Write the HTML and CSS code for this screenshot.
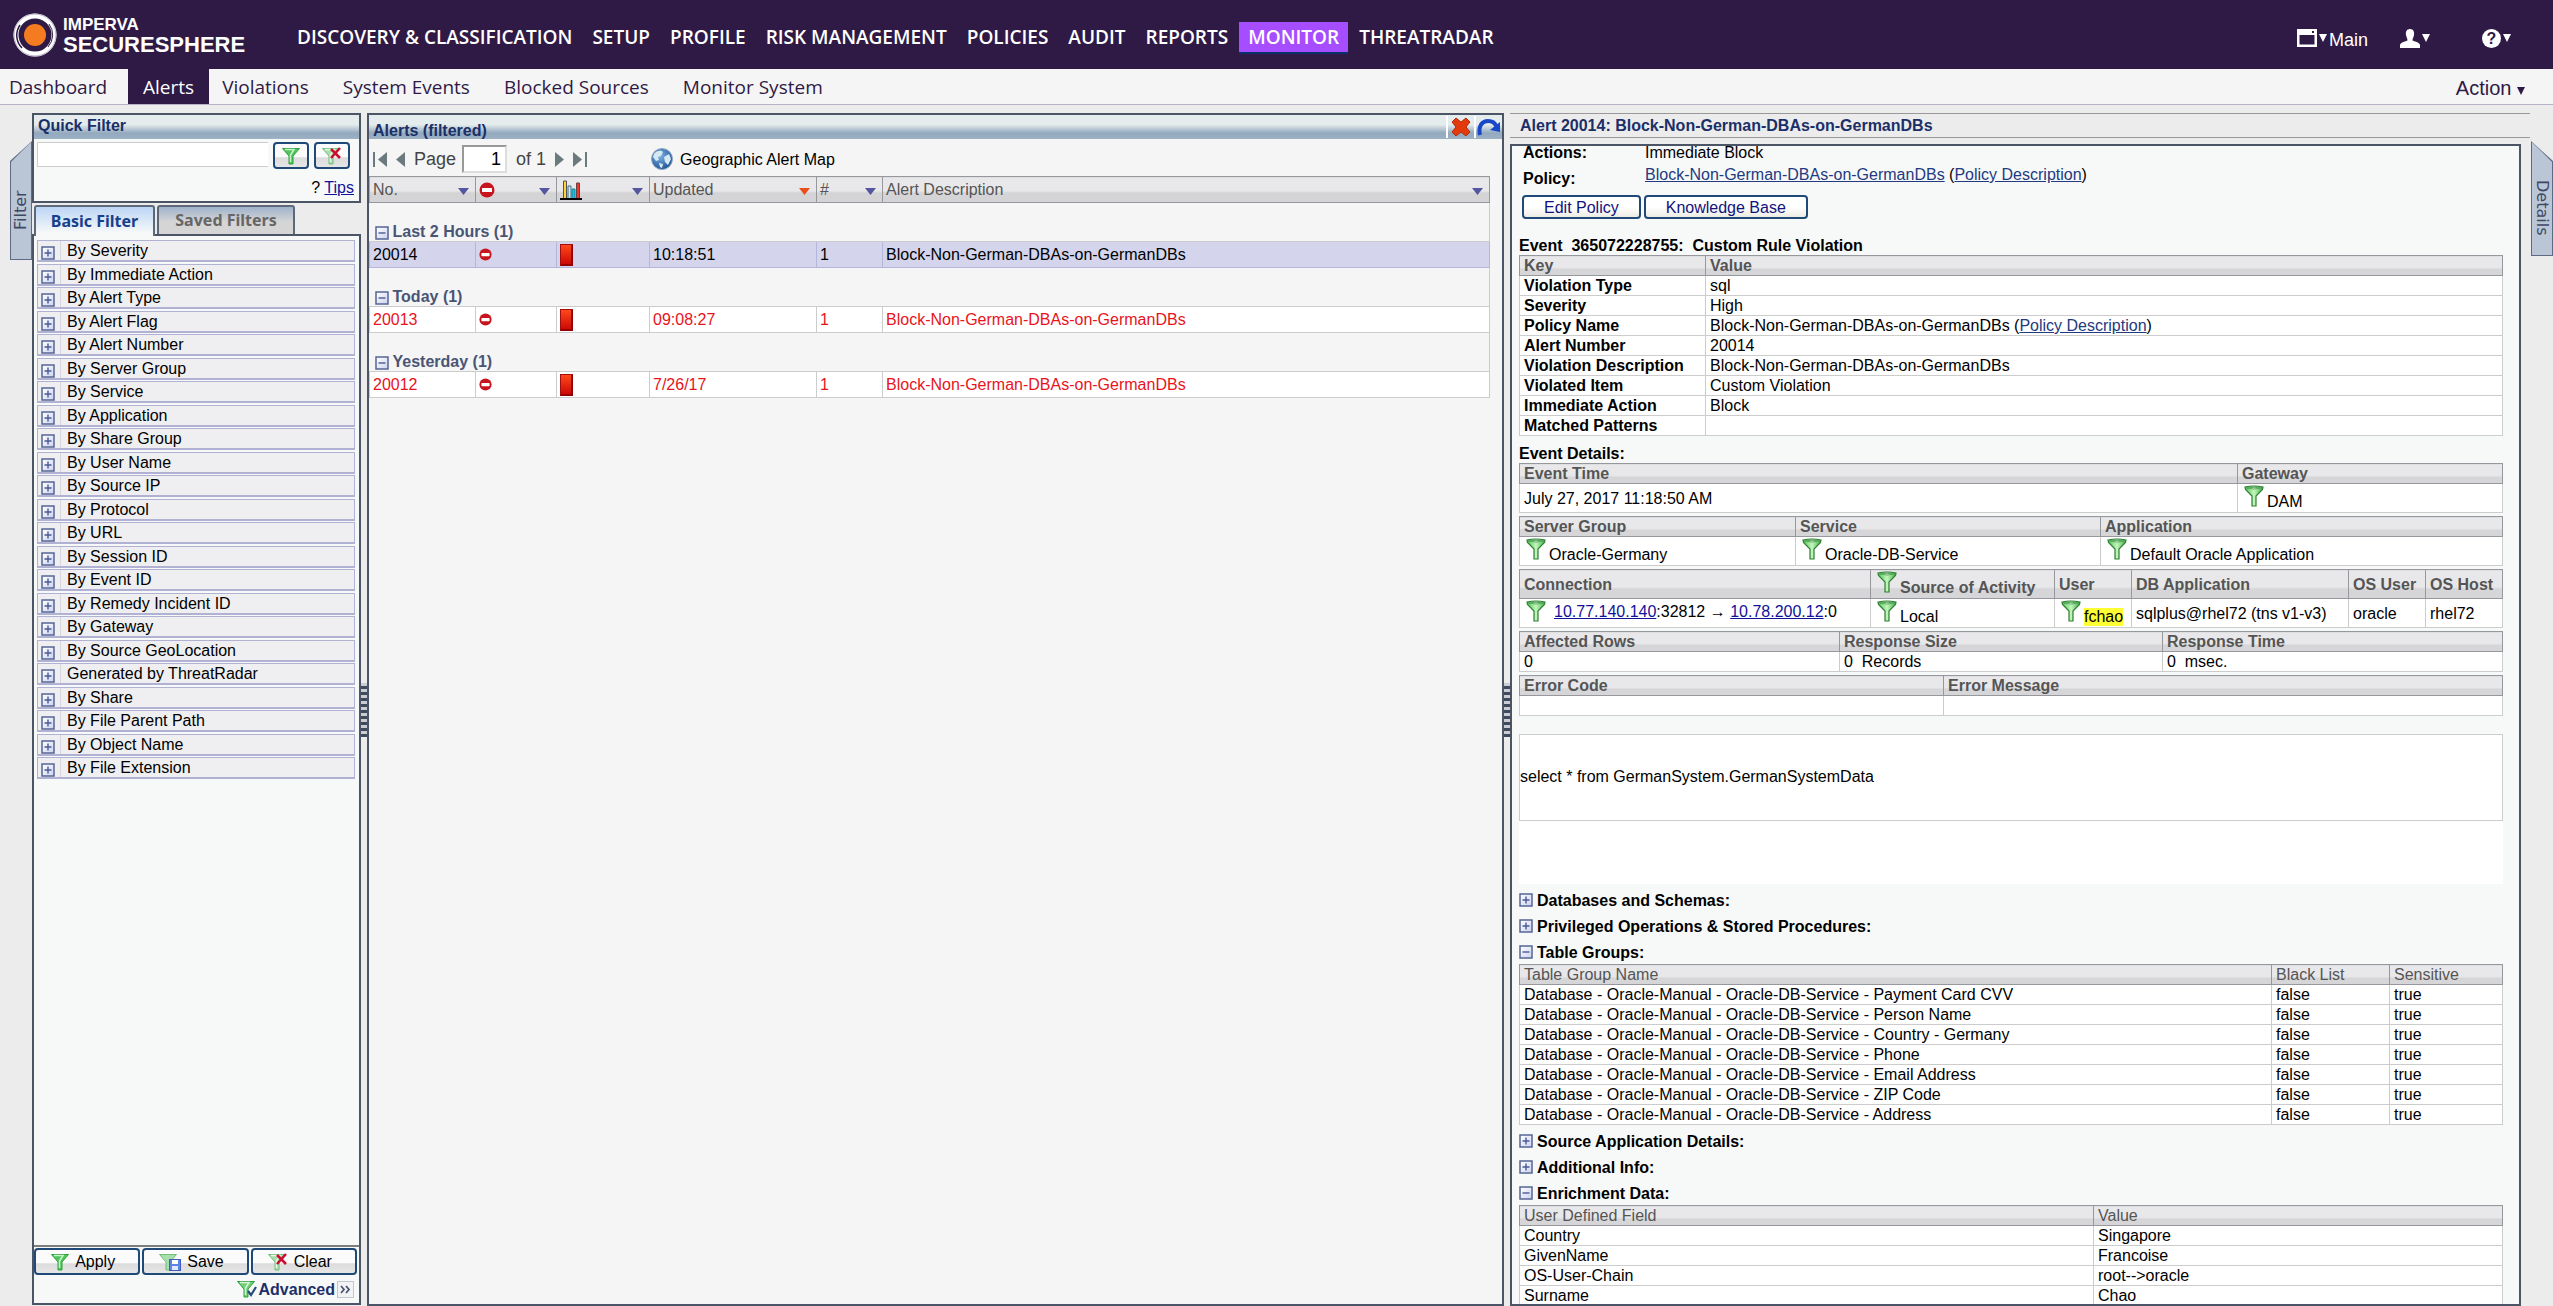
FILE: index.html
```html
<!DOCTYPE html>
<html lang="en">
<head>
    <meta charset="UTF-8">
    <meta name="viewport" content="width=device-width, initial-scale=1.0">
    <title>SecureSphere - Alerts</title>
    <link rel="stylesheet" href="styles.css">
</head>
<body>
    <!-- shared icons -->
    <svg class="defs" width="0" height="0" aria-hidden="true">
        <defs>
            <linearGradient id="green" x1="0" x2="1" y1="0" y2="0">
                <stop offset="0" stop-color="#4fc455"/>
                <stop offset="0.5" stop-color="#c4f7bd"/>
                <stop offset="1" stop-color="#3fb045"/>
            </linearGradient>
            <linearGradient id="red" x1="0" x2="0" y1="0" y2="1">
                <stop offset="0" stop-color="#ff4a1c"/>
                <stop offset="1" stop-color="#c80404"/>
            </linearGradient>
            <linearGradient id="box" x1="0" x2="1" y1="0" y2="1">
                <stop offset="0" stop-color="#ffffff"/>
                <stop offset="1" stop-color="#ccd2f0"/>
            </linearGradient>
            <radialGradient id="earth" cx="0.4" cy="0.35" r="0.7">
                <stop offset="0" stop-color="#7fb4e6"/>
                <stop offset="1" stop-color="#1c4f93"/>
            </radialGradient>
        </defs>
        <symbol id="funnel" viewBox="0 0 20 22">
            <path d="M1 2 Q10 0 19 2 L18.500 4.500 L12 11 V21 H8 V11 L1.500 4.500 Z" fill="url(#green)" stroke="#2f7f35" stroke-width="1.200"/>
            <path d="M2.500 3 Q10 1.500 17.500 3 Q10 5 2.500 3 Z" fill="#e9fbe6" stroke="#3c9442" stroke-width="0.800"/>
        </symbol>
        <symbol id="funnel-flat" viewBox="0 0 18 18">
            <path d="M0.500 1.500 H17.500 L11 9 V17 H7 V9 Z" fill="#52c45c" stroke="#2fa03c"/>
            <path d="M3 2.500 H12 L8.500 8 V15" fill="none" stroke="#c9f3cb" stroke-width="1.500"/>
        </symbol>
        <symbol id="funnel-x" viewBox="0 0 20 18">
            <path d="M0.500 1.500 H17.500 L11 9 V17 H7 V9 Z" fill="#a9dfad" stroke="#6fbf78"/>
            <path d="M3 2.500 H12 L8.500 8 V15" fill="none" stroke="#e6f8e6" stroke-width="1.500"/>
            <path d="M9 2 L18 11 M18 1 L9 11" stroke="#c8102e" stroke-width="2.600"/>
        </symbol>
        <symbol id="funnel-save" viewBox="0 0 22 18">
            <path d="M0.500 1.500 H17.500 L11 9 V17 H7 V9 Z" fill="#a9dfad" stroke="#6fbf78"/>
            <rect x="10.500" y="6.500" width="11" height="11" fill="#5c84e0" stroke="#3c5fc0"/>
            <rect x="13" y="7" width="6" height="4" fill="#fff"/>
            <rect x="13" y="13" width="6" height="4" fill="#dfe8ff"/>
        </symbol>
        <symbol id="funnel-check" viewBox="0 0 20 18">
            <path d="M0.500 1.500 H17.500 L11 9 V17 H7 V9 Z" fill="#6fd077" stroke="#2f9a3b"/>
            <path d="M3 2.500 H12 L8.500 8 V15" fill="none" stroke="#d9f6da" stroke-width="1.500"/>
            <path d="M11 11 L14 15 L19 7" fill="none" stroke="#2b4a7c" stroke-width="2.200"/>
        </symbol>
        <symbol id="plus" viewBox="0 0 14 14">
            <rect x="1" y="1" width="12" height="12" fill="url(#box)" stroke="#566694" stroke-width="1.500"/>
            <path d="M3.500 7 H10.500 M7 3.500 V10.500" stroke="#4a5b92" stroke-width="1.400"/>
        </symbol>
        <symbol id="minus" viewBox="0 0 14 14">
            <rect x="1" y="1" width="12" height="12" fill="url(#box)" stroke="#566694" stroke-width="1.500"/>
            <path d="M3.500 7 H10.500" stroke="#4a5b92" stroke-width="1.400"/>
        </symbol>
        <symbol id="block" viewBox="0 0 16 16">
            <circle cx="8" cy="8" r="7.500" fill="#c8141c"/>
            <rect x="3" y="6" width="10" height="4" rx="0.500" fill="#fff"/>
        </symbol>
        <symbol id="severity" viewBox="0 0 13 22">
            <rect x="0.500" y="0.500" width="12" height="21" fill="url(#red)" stroke="#a30d0d"/>
            <path d="M12 1 V21 H1" fill="none" stroke="#8c0000" stroke-width="1.500"/>
        </symbol>
        <symbol id="down" viewBox="0 0 11 8">
            <path d="M0 0 H11 L5.500 7 Z" fill="currentColor"/>
        </symbol>
        <symbol id="caret" viewBox="0 0 8 8">
            <path d="M0 0 H8 L4 8 Z" fill="currentColor"/>
        </symbol>
    </svg>

    <header class="topbar">
        <a class="logo" href="#" aria-label="Imperva SecureSphere">
            <svg width="44" height="46" viewBox="0 0 44 46">
                <circle cx="22" cy="23" r="19" fill="none" stroke="#fff" stroke-width="5"/>
                <circle cx="22" cy="23" r="21" fill="none" stroke="#b9b1c6" stroke-width="1"/>
                <path d="M7 13 A18 18 0 0 0 9 36" fill="none" stroke="#2f1a45" stroke-width="1.500"/>
                <path d="M36 12 A18 18 0 0 1 35 35" fill="none" stroke="#2f1a45" stroke-width="1"/>
                <circle cx="22" cy="23" r="11" fill="#f47b20"/>
            </svg>
            <span class="logo-text">
                <span class="logo-small">IMPERVA</span>
                <span class="logo-big">SECURESPHERE</span>
            </span>
        </a>
        <nav class="main-nav">
            <a href="#">DISCOVERY &amp; CLASSIFICATION</a>
            <a href="#">SETUP</a>
            <a href="#">PROFILE</a>
            <a href="#">RISK MANAGEMENT</a>
            <a href="#">POLICIES</a>
            <a href="#">AUDIT</a>
            <a href="#">REPORTS</a>
            <a href="#" class="active">MONITOR</a>
            <a href="#">THREATRADAR</a>
        </nav>
        <div class="tools">
            <button class="tool">
                <svg width="20" height="18" viewBox="0 0 20 18"><path d="M0 0 H20 V18 H0 Z M2.500 6 V15.500 H17.500 V6 Z" fill="#fff" fill-rule="evenodd"/><rect x="15" y="2" width="2" height="2" fill="#2f1a45"/></svg>
                <svg class="tri" width="8" height="8"><use href="#caret"/></svg>
                <span class="tool-name">Main</span>
            </button>
            <button class="tool" aria-label="User">
                <svg width="20" height="19" viewBox="0 0 20 19"><path d="M10 0 C13.500 0 14.500 3 14 6 C13.700 8 12.500 9.500 12.500 11.500 C14 12.500 19.500 13 20 16 V19 H0 V16 C0.500 13 6 12.500 7.500 11.500 C7.500 9.500 6.300 8 6 6 C5.500 3 6.500 0 10 0 Z" fill="#fff"/></svg>
                <svg class="tri" width="8" height="8"><use href="#caret"/></svg>
            </button>
            <button class="tool" aria-label="Help">
                <span class="help">?</span>
                <svg class="tri" width="8" height="8"><use href="#caret"/></svg>
            </button>
        </div>
    </header>

    <nav class="sub-nav">
        <a href="#">Dashboard</a>
        <a href="#" class="active">Alerts</a>
        <a href="#">Violations</a>
        <a href="#">System Events</a>
        <a href="#">Blocked Sources</a>
        <a href="#">Monitor System</a>
        <button class="action">Action <svg width="8" height="8"><use href="#caret"/></svg></button>
    </nav>

    <main class="workspace">
        <div class="gutter">
            <button class="side-tab side-left"><span>Filter</span></button>
        </div>

        <aside class="filter">
            <section class="quick">
                <h2 class="bar">Quick Filter</h2>
                <div class="quick-row">
                    <input type="text" class="quick-input" aria-label="Quick filter">
                    <button class="btn icon-btn" aria-label="Apply quick filter"><svg width="18" height="18"><use href="#funnel-flat"/></svg></button>
                    <button class="btn icon-btn" aria-label="Clear quick filter"><svg width="20" height="18"><use href="#funnel-x"/></svg></button>
                </div>
                <p class="tips">? <a href="#">Tips</a></p>
            </section>
            <div class="tabs">
                <button class="tab tab-on">Basic Filter</button>
                <button class="tab">Saved Filters</button>
            </div>
            <div class="filter-body">
                <ul class="filter-list" id="filterList"></ul>
                <div class="filter-buttons">
                    <button class="btn"><svg width="18" height="18"><use href="#funnel-flat"/></svg>Apply</button>
                    <button class="btn"><svg width="22" height="18"><use href="#funnel-save"/></svg>Save</button>
                    <button class="btn"><svg width="20" height="18"><use href="#funnel-x"/></svg>Clear</button>
                </div>
                <button class="advanced"><svg width="20" height="18"><use href="#funnel-check"/></svg>Advanced<svg width="17" height="17" viewBox="0 0 17 17"><rect x="0.500" y="0.500" width="16" height="16" fill="#f3f3f6" stroke="#c3c6d2"/><path d="M4 5 L7 8.500 L4 12 M9 5 L12 8.500 L9 12" fill="none" stroke="#4a5575" stroke-width="1.800"/></svg></button>
            </div>
        </aside>

        <div class="splitter"><span class="grip"></span></div>

        <section class="alerts">
            <div class="bar alerts-bar">
                <h2>Alerts (filtered)</h2>
                <button class="bar-btn" aria-label="Close"><svg width="20" height="20" viewBox="0 0 20 20"><path d="M5 1 L10 5 L15 1 L19 5 L15 10 L19 15 L15 19 L10 15 L5 19 L1 15 L5 10 L1 5 Z" fill="#e33a0c" stroke="#b52c05"/></svg></button>
                <button class="bar-btn" aria-label="Refresh"><svg width="24" height="18" viewBox="0 0 24 18"><path d="M3 17 C1 8 5 3 11 3 C15 3 18 5 19 8" fill="none" stroke="#1746c8" stroke-width="4"/><path d="M13 12 L23 14 L23 4 Z" fill="#1746c8"/></svg></button>
            </div>
            <div class="pager">
                <button aria-label="First page"><svg width="15" height="15" viewBox="0 0 15 15"><path d="M1 0 H3 V15 H1 Z M15 0 V15 L6 7.500 Z" fill="#6b7a7c"/></svg></button>
                <button aria-label="Previous page"><svg width="9" height="15" viewBox="0 0 9 15"><path d="M9 0 V15 L0 7.500 Z" fill="#6b7a7c"/></svg></button>
                <label for="page">Page</label>
                <input type="text" id="page" value="1">
                <span>of 1</span>
                <button aria-label="Next page"><svg width="9" height="15" viewBox="0 0 9 15"><path d="M0 0 V15 L9 7.500 Z" fill="#6b7a7c"/></svg></button>
                <button aria-label="Last page"><svg width="15" height="15" viewBox="0 0 15 15"><path d="M12 0 H14 V15 H12 Z M0 0 V15 L9 7.500 Z" fill="#6b7a7c"/></svg></button>
                <button class="map"><svg width="22" height="22" viewBox="0 0 22 22"><circle cx="11" cy="11" r="10.500" fill="url(#earth)" stroke="#8fa6c2"/><path d="M3 6 C6 2 10 2 12 4 L10 8 L7 9 L8 12 L5 13 L2 9 Z M13 9 L18 6 L20 11 L17 17 L14 14 Z M8 15 L12 16 L11 20 L9 19 Z" fill="#d5e9f2"/></svg>Geographic Alert Map</button>
            </div>
            <table class="alert-table">
                <colgroup>
                    <col class="w-no"><col class="w-block"><col class="w-sev"><col class="w-upd"><col class="w-num"><col>
                </colgroup>
                <thead>
                    <tr>
                        <th><div class="th">No. <svg width="11" height="8"><use href="#down"/></svg></div></th>
                        <th><div class="th"><svg width="16" height="16" role="img" aria-label="Action"><use href="#block"/></svg><svg width="11" height="8"><use href="#down"/></svg></div></th>
                        <th><div class="th"><svg width="22" height="20" viewBox="0 0 22 20" role="img" aria-label="Severity"><path d="M0 19 H22" stroke="#000" stroke-width="2"/><path d="M3.500 18 V1 H6.500 V18" fill="#ffd23c" stroke="#555"/><path d="M8 18 V6 H11 V18" fill="#cfe6ee" stroke="#3c6f80"/><path d="M12 18 V9 H15 V18" fill="#19c3e0" stroke="#1b7f92"/><path d="M16.500 18 V3 H19.500 V18" fill="#ea3a30" stroke="#6d4040"/></svg><svg width="11" height="8"><use href="#down"/></svg></div></th>
                        <th><div class="th">Updated <svg class="sorted" width="11" height="8"><use href="#down"/></svg></div></th>
                        <th><div class="th"># <svg width="11" height="8"><use href="#down"/></svg></div></th>
                        <th><div class="th">Alert Description <svg width="11" height="8"><use href="#down"/></svg></div></th>
                    </tr>
                </thead>
                <tbody>
                    <tr class="group"><td colspan="6"><svg width="14" height="14"><use href="#minus"/></svg>Last 2 Hours (1)</td></tr>
                    <tr class="selected">
                        <td>20014</td>
                        <td class="ico"><svg width="13" height="13"><use href="#block"/></svg></td>
                        <td class="ico"><svg width="13" height="22"><use href="#severity"/></svg></td>
                        <td>10:18:51</td><td>1</td><td>Block-Non-German-DBAs-on-GermanDBs</td>
                    </tr>
                    <tr class="group"><td colspan="6"><svg width="14" height="14"><use href="#minus"/></svg>Today (1)</td></tr>
                    <tr class="unread">
                        <td>20013</td>
                        <td class="ico"><svg width="13" height="13"><use href="#block"/></svg></td>
                        <td class="ico"><svg width="13" height="22"><use href="#severity"/></svg></td>
                        <td>09:08:27</td><td>1</td><td>Block-Non-German-DBAs-on-GermanDBs</td>
                    </tr>
                    <tr class="group"><td colspan="6"><svg width="14" height="14"><use href="#minus"/></svg>Yesterday (1)</td></tr>
                    <tr class="unread">
                        <td>20012</td>
                        <td class="ico"><svg width="13" height="13"><use href="#block"/></svg></td>
                        <td class="ico"><svg width="13" height="22"><use href="#severity"/></svg></td>
                        <td>7/26/17</td><td>1</td><td>Block-Non-German-DBAs-on-GermanDBs</td>
                    </tr>
                </tbody>
            </table>
        </section>

        <div class="splitter"><span class="grip"></span></div>

        <section class="details">
            <h2 class="details-title">Alert 20014: Block-Non-German-DBAs-on-GermanDBs</h2>
            <div class="details-body">
                <dl class="summary">
                    <dt>Actions:</dt><dd>Immediate Block</dd>
                    <dt>Policy:</dt><dd><a href="#">Block-Non-German-DBAs-on-GermanDBs</a> (<a href="#">Policy Description</a>)</dd>
                </dl>
                <div class="policy-buttons">
                    <button class="btn">Edit Policy</button>
                    <button class="btn">Knowledge Base</button>
                </div>

                <h3 class="event-title">Event&nbsp; 365072228755:&nbsp; Custom Rule Violation</h3>
                <table class="grid keys">
                    <colgroup><col class="w-key"><col></colgroup>
                    <thead><tr><th>Key</th><th>Value</th></tr></thead>
                    <tbody>
                        <tr><th>Violation Type</th><td>sql</td></tr>
                        <tr><th>Severity</th><td>High</td></tr>
                        <tr><th>Policy Name</th><td>Block-Non-German-DBAs-on-GermanDBs (<a href="#">Policy Description</a>)</td></tr>
                        <tr><th>Alert Number</th><td>20014</td></tr>
                        <tr><th>Violation Description</th><td>Block-Non-German-DBAs-on-GermanDBs</td></tr>
                        <tr><th>Violated Item</th><td>Custom Violation</td></tr>
                        <tr><th>Immediate Action</th><td>Block</td></tr>
                        <tr><th>Matched Patterns</th><td></td></tr>
                    </tbody>
                </table>

                <h3 class="event-details">Event Details:</h3>
                <div class="grids">
                    <table class="grid">
                        <colgroup><col><col class="w-gateway"></colgroup>
                        <thead><tr><th>Event Time</th><th>Gateway</th></tr></thead>
                        <tbody><tr class="tall"><td>July 27, 2017 11:18:50 AM</td><td><span class="with-icon"><svg width="20" height="22"><use href="#funnel"/></svg><span>DAM</span></span></td></tr></tbody>
                    </table>
                    <table class="grid">
                        <colgroup><col class="w-group"><col class="w-service"><col></colgroup>
                        <thead><tr><th>Server Group</th><th>Service</th><th>Application</th></tr></thead>
                        <tbody>
                            <tr class="tall">
                                <td><span class="with-icon"><svg width="20" height="22"><use href="#funnel"/></svg><span>Oracle-Germany</span></span></td>
                                <td><span class="with-icon"><svg width="20" height="22"><use href="#funnel"/></svg><span>Oracle-DB-Service</span></span></td>
                                <td><span class="with-icon"><svg width="20" height="22"><use href="#funnel"/></svg><span>Default Oracle Application</span></span></td>
                            </tr>
                        </tbody>
                    </table>
                    <table class="grid">
                        <colgroup><col><col class="w-source"><col class="w-user"><col class="w-dbapp"><col class="w-os"><col class="w-os"></colgroup>
                        <thead>
                            <tr class="tall">
                                <th>Connection</th>
                                <th><span class="with-icon"><svg width="20" height="22"><use href="#funnel"/></svg><span>Source of Activity</span></span></th>
                                <th>User</th><th>DB Application</th><th>OS User</th><th>OS Host</th>
                            </tr>
                        </thead>
                        <tbody>
                            <tr class="tall">
                                <td><span class="with-icon conn"><svg width="20" height="22"><use href="#funnel"/></svg><span><a href="#" class="ip">10.77.140.140</a>:32812 → <a href="#" class="ip">10.78.200.12</a>:0</span></span></td>
                                <td><span class="with-icon"><svg width="20" height="22"><use href="#funnel"/></svg><span>Local</span></span></td>
                                <td><span class="with-icon"><svg width="20" height="22"><use href="#funnel"/></svg><mark>fchao</mark></span></td>
                                <td>sqlplus@rhel72 (tns v1-v3)</td>
                                <td>oracle</td>
                                <td>rhel72</td>
                            </tr>
                        </tbody>
                    </table>
                    <table class="grid">
                        <colgroup><col class="w-rows"><col class="w-size"><col></colgroup>
                        <thead><tr><th>Affected Rows</th><th>Response Size</th><th>Response Time</th></tr></thead>
                        <tbody><tr><td>0</td><td>0&nbsp; Records</td><td>0&nbsp; msec.</td></tr></tbody>
                    </table>
                    <table class="grid">
                        <colgroup><col class="w-error"><col></colgroup>
                        <thead><tr><th>Error Code</th><th>Error Message</th></tr></thead>
                        <tbody><tr><td></td><td></td></tr></tbody>
                    </table>
                </div>

                <div class="query">
                    <div class="query-text">select * from GermanSystem.GermanSystemData</div>
                </div>

                <div class="sections">
                    <button class="section"><svg width="14" height="14"><use href="#plus"/></svg>Databases and Schemas:</button>
                    <button class="section"><svg width="14" height="14"><use href="#plus"/></svg>Privileged Operations &amp; Stored Procedures:</button>
                    <button class="section"><svg width="14" height="14"><use href="#minus"/></svg>Table Groups:</button>
                </div>
                <table class="grid light">
                    <colgroup><col><col class="w-black"><col class="w-sens"></colgroup>
                    <thead><tr><th>Table Group Name</th><th>Black List</th><th>Sensitive</th></tr></thead>
                    <tbody>
                        <tr><td>Database - Oracle-Manual - Oracle-DB-Service - Payment Card CVV</td><td>false</td><td>true</td></tr>
                        <tr><td>Database - Oracle-Manual - Oracle-DB-Service - Person Name</td><td>false</td><td>true</td></tr>
                        <tr><td>Database - Oracle-Manual - Oracle-DB-Service - Country - Germany</td><td>false</td><td>true</td></tr>
                        <tr><td>Database - Oracle-Manual - Oracle-DB-Service - Phone</td><td>false</td><td>true</td></tr>
                        <tr><td>Database - Oracle-Manual - Oracle-DB-Service - Email Address</td><td>false</td><td>true</td></tr>
                        <tr><td>Database - Oracle-Manual - Oracle-DB-Service - ZIP Code</td><td>false</td><td>true</td></tr>
                        <tr><td>Database - Oracle-Manual - Oracle-DB-Service - Address</td><td>false</td><td>true</td></tr>
                    </tbody>
                </table>
                <div class="sections">
                    <button class="section"><svg width="14" height="14"><use href="#plus"/></svg>Source Application Details:</button>
                    <button class="section"><svg width="14" height="14"><use href="#plus"/></svg>Additional Info:</button>
                    <button class="section"><svg width="14" height="14"><use href="#minus"/></svg>Enrichment Data:</button>
                </div>
                <table class="grid light">
                    <colgroup><col><col class="w-value"></colgroup>
                    <thead><tr><th>User Defined Field</th><th>Value</th></tr></thead>
                    <tbody>
                        <tr><td>Country</td><td>Singapore</td></tr>
                        <tr><td>GivenName</td><td>Francoise</td></tr>
                        <tr><td>OS-User-Chain</td><td>root--&gt;oracle</td></tr>
                        <tr><td>Surname</td><td>Chao</td></tr>
                    </tbody>
                </table>
            </div>
        </section>

        <div class="gutter">
            <button class="side-tab side-right"><span>Details</span></button>
        </div>
    </main>

    <script>
        const filters = [
            'By Severity', 'By Immediate Action', 'By Alert Type', 'By Alert Flag',
            'By Alert Number', 'By Server Group', 'By Service', 'By Application',
            'By Share Group', 'By User Name', 'By Source IP', 'By Protocol', 'By URL',
            'By Session ID', 'By Event ID', 'By Remedy Incident ID', 'By Gateway',
            'By Source GeoLocation', 'Generated by ThreatRadar', 'By Share',
            'By File Parent Path', 'By Object Name', 'By File Extension'
        ];

        // Fill the basic filter list
        document.getElementById("filterList").innerHTML = filters.map(name =>
            `<li><button class="filter-item"><svg width="14" height="14"><use href="#plus"/></svg><span>${name}</span></button></li>`
        ).join('');
    </script>
</body>
</html>
```
FILE: styles.css
```css
* {
    box-sizing: border-box;
}

body {
    display: flex;
    flex-direction: column;
    height: 100vh;
    margin: 0;
    overflow: hidden;
    background-color: #ececec;
    color: #000;
    font-family: "Liberation Sans", Arial, sans-serif;
    font-size: 16px;
    line-height: 19px;
}

h2,
h3,
p,
ul,
dl,
dd {
    margin: 0;
    padding: 0;
}

h2,
h3 {
    font-size: 16px;
}

button {
    padding: 0;
    border: none;
    background: none;
    color: inherit;
    font: inherit;
    cursor: pointer;
}

svg {
    flex: none;
}

a {
    color: #233a80;
}

.defs {
    position: absolute;
}

/* top bar */
.topbar {
    display: flex;
    align-items: center;
    height: 69px;
    flex: none;
    padding: 0 42px 0 13px;
    background-color: #2f1a45;
    color: #fff;
}

.logo {
    display: flex;
    align-items: center;
    gap: 6px;
    width: 275px;
    color: #fff;
    text-decoration: none;
}

.logo-text {
    display: flex;
    flex-direction: column;
    padding-top: 3px;
    font-weight: bold;
}

.logo-small {
    font-size: 17px;
    line-height: 17px;
}

.logo-big {
    font-size: 22px;
    line-height: 24px;
}

.main-nav {
    display: flex;
    flex: 1;
    gap: 2px;
    padding-top: 6px;
}

.main-nav a {
    padding: 0 9px;
    border-bottom: 2px solid transparent;
    color: #fff;
    font-family: "Open Sans", sans-serif;
    font-size: 19px;
    font-weight: 600;
    line-height: 30px;
    text-decoration: none;
}

.main-nav .active {
    background-color: #a64dff;
    border-bottom-color: #0b2f6b;
}

.tools {
    display: flex;
    align-items: center;
    gap: 32px;
    padding-top: 8px;
    font-size: 18px;
}

.tool {
    display: flex;
    gap: 2px;
    height: 20px;
}

.tool:last-child {
    margin-left: 20px;
}

.tool .tri {
    margin-top: 5px;
}

.tool-name {
    padding-top: 2px;
}

.help {
    width: 19px;
    height: 19px;
    border-radius: 50%;
    background-color: #fff;
    color: #2f1a45;
    font-size: 16px;
    font-weight: bold;
    line-height: 19px;
}

/* second level navigation */
.sub-nav {
    display: flex;
    flex: none;
    height: 36px;
    border-bottom: 1px solid #b9afc6;
    background-color: #f5f5f5;
}

.sub-nav a {
    padding: 0 19px 0 15px;
    color: #2f1a45;
    font-family: "Open Sans", sans-serif;
    font-size: 19px;
    line-height: 36px;
    text-decoration: none;
}

.sub-nav a:first-child {
    padding: 0 21px 0 9px;
}

.sub-nav .active {
    padding: 0 15px;
    margin-right: -2px;
    background-color: #2f1a45;
    color: #fff;
}

.action {
    margin-left: auto;
    padding: 4px 28px 0 0;
    color: #2f1a45;
    font-size: 20px;
}

/* work area */
.workspace {
    display: grid;
    grid-template-columns: 32px 329px 6px 1137fr 6px 1020fr 23px;
    grid-template-rows: minmax(0, 1fr);
    flex: 1;
    min-height: 0;
    padding-top: 8px;
}

.gutter {
    display: flex;
    justify-content: flex-end;
    align-items: flex-start;
    padding-top: 28px;
}

.side-tab {
    display: flex;
    width: 22px;
    padding: 1px;
    background-color: #5d6a85;
    color: #3f4966;
    font-family: "DejaVu Sans", sans-serif;
    font-size: 16px;
    writing-mode: vertical-rl;
}

.side-tab span {
    flex: 1;
    background-color: #bac6d5;
    line-height: 20px;
    text-align: center;
}

.side-left {
    height: 119px;
    clip-path: polygon(0 20px, 100% 0, 100% 100%, 0 100%);
}

.side-left span {
    padding-bottom: 20px;
    transform: rotate(180deg);
    clip-path: polygon(0 0, 100% 0, 100% calc(100% - 20px), 0 100%);
}

.side-right {
    height: 115px;
    clip-path: polygon(0 0, 100% 20px, 100% 100%, 0 100%);
}

.side-right span {
    padding-top: 18px;
    clip-path: polygon(0 0, 100% 20px, 100% 100%, 0 100%);
}

.bar {
    height: 24px;
    padding-left: 4px;
    background: linear-gradient(#e4eced 40%, #93a9be 75%, #9db1c5);
    color: #1b2f68;
    line-height: 22px;
}

.btn {
    display: flex;
    justify-content: center;
    align-items: center;
    border: 2px solid #1f4a78;
    border-radius: 4px;
    background: linear-gradient(#fbfbfb 55%, #dcdcdc 60%, #e6e6e6);
}

/* filter pane */
.filter {
    display: flex;
    flex-direction: column;
    padding-bottom: 1px;
}

.quick {
    height: 90px;
    border: 2px solid #4c5566;
    background-color: #f7f9f9;
}

.quick-row {
    display: flex;
    gap: 5px;
    padding: 3px 9px 0 3px;
}

.quick-input {
    flex: 1;
    min-width: 0;
    height: 25px;
    border: 1px solid #ccc;
    border-right: none;
}

.icon-btn {
    width: 36px;
    height: 27px;
}

.tips {
    padding: 9px 5px 0 0;
    text-align: right;
}

.tips a,
.ip {
    color: #12129a;
}

.tabs {
    display: flex;
    gap: 2px;
    height: 33px;
    margin-bottom: -2px;
    padding: 2px 0 0 2px;
}

.tab {
    width: 138px;
    border: 2px solid #5d6878;
    border-radius: 3px 3px 0 0;
    background: linear-gradient(#9fb3cc, #d5d5d5 55%);
    color: #666;
    font-family: "Noto Sans", sans-serif;
    font-weight: bold;
}

.tab-on {
    width: 121px;
    border-bottom: none;
    background: linear-gradient(#bcd5f5, #f7f9f9 90%);
    color: #17408b;
    z-index: 1;
}

.filter-body {
    display: flex;
    flex: 1;
    flex-direction: column;
    min-height: 0;
    border: 2px solid #4c5566;
    background-color: #f7f9f9;
}

.filter-list {
    flex: 1;
    padding: 4px 4px 0 3px;
    list-style: none;
}

.filter-list li {
    display: flex;
    margin-bottom: 2px;
}

.filter-list li:nth-child(even) {
    margin-bottom: 1px;
}

.filter-item {
    display: flex;
    align-items: flex-end;
    width: 100%;
    height: 22px;
    padding-left: 3px;
    border: 1px solid #b1b1d3;
    border-bottom-width: 2px;
    background-color: #efeff1;
}

.filter-item svg {
    margin-right: 5px;
}

.filter-item span {
    padding-left: 6px;
    border-left: 1px solid #d6d6dc;
}

.filter-buttons {
    display: flex;
    gap: 2px;
    padding: 1px 2px 0 0;
    border-top: 2px solid #7d7d7d;
}

.filter-buttons .btn {
    flex: 1;
    gap: 6px;
    height: 27px;
    padding-right: 8px;
}

.advanced {
    display: flex;
    align-items: center;
    align-self: flex-end;
    gap: 2px;
    height: 28px;
    padding-right: 5px;
    color: #1b2f68;
    font-weight: bold;
}

.splitter {
    display: flex;
    align-items: center;
}

.grip {
    width: 100%;
    height: 54px;
    background: repeating-linear-gradient(#c9cdd3 0 3px, #3f4a5c 3px 6px);
}

/* alerts list */
.alerts {
    border: 2px solid #4c5566;
    background-color: #f5f5f5;
}

.alerts-bar {
    display: flex;
    align-items: center;
}

.alerts-bar h2 {
    flex: 1;
    padding-top: 8px;
}

.bar-btn {
    display: flex;
    align-items: center;
    height: 22px;
    padding: 0 3px;
    border-left: 2px solid #fff;
}

.bar-btn:last-child {
    padding: 0 1px;
}

.pager {
    display: flex;
    align-items: center;
    gap: 9px;
    height: 37px;
    padding: 3px 0 0 3px;
    color: #444;
    font-size: 18px;
}

.pager button {
    display: flex;
}

.pager input {
    width: 45px;
    height: 28px;
    margin-left: -3px;
    padding: 0 4px;
    border: 2px solid #ddd;
    border-top-color: #999;
    border-left-color: #999;
    font: inherit;
    text-align: right;
}

.pager .map {
    align-items: center;
    gap: 7px;
    margin-left: 54px;
    color: #000;
    font-size: 16px;
}

table {
    width: 100%;
    border-collapse: collapse;
    table-layout: fixed;
}

th {
    text-align: left;
}

.alert-table {
    width: calc(100% - 12px);
    border-right: 1px solid #ccc;
}

.alert-table th {
    height: 26px;
    padding: 0 6px 0 3px;
    border: 1px solid #96989e;
    border-left-color: #aaa;
    background: linear-gradient(#e8e8ea 55%, #d4d4d6 60%);
    color: #555;
    font-weight: normal;
}

.th {
    display: flex;
    justify-content: space-between;
    align-items: center;
    height: 24px;
}

.th svg:last-child {
    margin-top: 4px;
    color: #5556a0;
}

.th .sorted:last-child {
    color: #e8501a;
}

.alert-table td {
    height: 26px;
    padding: 0 3px;
    border: 1px solid #ccc;
    background-color: #fff;
}

.alert-table .group td {
    height: 39px;
    padding: 18px 0 0 5px;
    border-left: none;
    background: none;
    color: #4a5575;
    font-weight: bold;
}

.group svg {
    margin-right: 4px;
    vertical-align: -3px;
}

.alert-table .selected td {
    border-color: #b5b7da;
    background-color: #d4d5ec;
}

.alert-table .unread td {
    color: #e8131b;
}

.alert-table .ico svg {
    display: block;
}

.w-no { width: 106px; }
.w-block { width: 81px; }
.w-sev { width: 93px; }
.w-upd { width: 167px; }
.w-num { width: 66px; }

/* alert details */
.details {
    display: flex;
    flex-direction: column;
    min-width: 0;
}

.details-title {
    flex: none;
    height: 25px;
    margin-bottom: 6px;
    padding-left: 10px;
    border-top: 1px solid #999;
    border-bottom: 1px solid #999;
    color: #1b2f68;
    line-height: 23px;
}

.details-body {
    flex: 1;
    min-height: 0;
    margin-right: 9px;
    padding: 0 16px 0 7px;
    overflow: hidden;
    border: 2px solid #4c5566;
    background-color: #f7f9f9;
}

.summary {
    display: grid;
    grid-template-columns: 122px 1fr;
    padding-left: 4px;
    line-height: 14px;
}

.summary dt {
    font-weight: bold;
}

.summary dt:nth-of-type(2) {
    padding-top: 12px;
}

.summary dd:nth-of-type(2) {
    padding-top: 8px;
}

.policy-buttons {
    display: flex;
    gap: 3px;
    padding: 9px 0 0 3px;
    color: #12127c;
}

.policy-buttons .btn {
    height: 24px;
    padding: 0 20px;
    background: linear-gradient(#fff 50%, #ecebe4);
}

.event-title {
    padding: 17px 0 0;
}

.event-details {
    padding-top: 8px;
}

.grid th,
.grid td {
    height: 20px;
    padding: 0 4px;
    border: 1px solid #ccc;
    background-color: #fff;
    white-space: nowrap;
}

.grid thead th {
    border-color: #96989e;
    background: linear-gradient(#e8e8ea 60%, #d6d6d8 65%);
    color: #555;
}

.grid .tall td,
.grid .tall th {
    height: 29px;
}

.light thead th {
    font-weight: normal;
}

.grids {
    display: flex;
    flex-direction: column;
    gap: 3px;
}

.with-icon {
    display: flex;
    align-items: flex-start;
    gap: 3px;
    height: 26px;
    padding-left: 2px;
}

.with-icon > :last-child {
    margin-top: 8px;
    line-height: 18px;
}

.with-icon.conn {
    gap: 8px;
}

.conn > :last-child {
    margin-top: 3px;
}

mark {
    background-color: #ffff33;
}

.w-key { width: 186px; }
.w-gateway { width: 265px; }
.w-group { width: 276px; }
.w-service { width: 305px; }
.w-source { width: 184px; }
.w-user { width: 77px; }
.w-dbapp { width: 217px; }
.w-os { width: 77px; }
.w-rows { width: 320px; }
.w-size { width: 323px; }
.w-error { width: 424px; }
.w-black { width: 118px; }
.w-sens { width: 113px; }
.w-value { width: 409px; }

.query {
    height: 150px;
    margin-top: 18px;
    background-color: #fff;
}

.query-text {
    height: 87px;
    border: 1px solid #ccc;
    line-height: 84px;
}

.sections {
    display: flex;
    flex-direction: column;
    align-items: flex-start;
    margin-bottom: -1px;
    padding-top: 3px;
}

.section {
    display: flex;
    align-items: center;
    gap: 4px;
    height: 26px;
    font-weight: bold;
}
```
